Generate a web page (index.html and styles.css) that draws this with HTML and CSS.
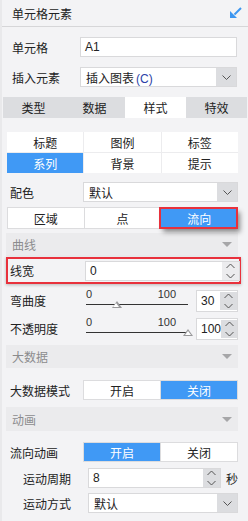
FILE: index.html
```html
<!DOCTYPE html>
<html>
<head>
<meta charset="utf-8">
<link rel="stylesheet" href="styles.css">
</head>
<body>
<div class="panel">
  <div class="header">
    <span>单元格元素</span>
    <svg class="hdr-icon" width="12" height="12" viewBox="0 0 12 12">
      <path d="M11 1 L4.5 7.5" stroke="#3d96f0" stroke-width="2" fill="none"/>
      <path d="M0 4 L0 11 L7 11 Z" fill="#3d96f0"/>
    </svg>
  </div>

  <div class="row r-cell">
    <span class="lbl w68">单元格</span>
    <div class="input w157">A1</div>
  </div>
  <div class="row r-insert">
    <span class="lbl w68">插入元素</span>
    <div class="select w157"><span class="sel-text">插入图表<span class="hot">(C)</span></span><span class="dd"><svg width="9" height="5" viewBox="0 0 9 5"><path d="M0.5 0.5 L4.5 4.5 L8.5 0.5" stroke="#555" fill="none"/></svg></span></div>
  </div>

  <div class="tabs">
    <div class="tab">类型</div>
    <div class="tab">数据</div>
    <div class="tab on">样式</div>
    <div class="tab">特效</div>
  </div>

  <div class="subgrid">
    <div class="sg">标题</div>
    <div class="sg">图例</div>
    <div class="sg">标签</div>
    <div class="sg on">系列</div>
    <div class="sg">背景</div>
    <div class="sg">提示</div>
  </div>

  <div class="row r-color">
    <span class="lbl w73">配色</span>
    <div class="select w155"><span class="sel-text">默认</span><span class="dd"><svg width="9" height="5" viewBox="0 0 9 5"><path d="M0.5 0.5 L4.5 4.5 L8.5 0.5" stroke="#555" fill="none"/></svg></span></div>
  </div>

  <div class="seg seg-main">
    <div class="sc">区域</div>
    <div class="sc">点</div>
    <div class="sc on mark">流向</div>
  </div>

  <div class="sec s-curve"><span>曲线</span><span class="tri"></span></div>

  <div class="mark-row">
    <span class="lbl w73i">线宽</span>
    <div class="spin-input w155">
      <span class="val">0</span>
      <span class="spin light"><svg width="9" height="16" viewBox="0 0 9 16"><path d="M0.5 5 L4.5 1 L8.5 5" stroke="#555" fill="none"/><path d="M0.5 11 L4.5 15 L8.5 11" stroke="#555" fill="none"/></svg></span>
    </div>
  </div>

  <div class="row r-slider1">
    <span class="lbl w76">弯曲度</span>
    <div class="slider">
      <div class="sl-labels"><span>0</span><span>100</span></div>
      <div class="sl-track"><span class="thumb" style="left:30%"></span></div>
    </div>
    <div class="spin-input w42">
      <span class="val">30</span>
      <span class="spin"><svg width="9" height="16" viewBox="0 0 9 16"><path d="M0.5 5 L4.5 1 L8.5 5" stroke="#555" fill="none"/><path d="M0.5 11 L4.5 15 L8.5 11" stroke="#555" fill="none"/></svg></span>
    </div>
  </div>

  <div class="row r-slider2">
    <span class="lbl w76">不透明度</span>
    <div class="slider">
      <div class="sl-labels"><span>0</span><span>100</span></div>
      <div class="sl-track"><span class="thumb" style="left:100%"></span></div>
    </div>
    <div class="spin-input w42">
      <span class="val">100</span>
      <span class="spin"><svg width="9" height="16" viewBox="0 0 9 16"><path d="M0.5 5 L4.5 1 L8.5 5" stroke="#555" fill="none"/><path d="M0.5 11 L4.5 15 L8.5 11" stroke="#555" fill="none"/></svg></span>
    </div>
  </div>

  <div class="sec s-big"><span>大数据</span><span class="tri"></span></div>

  <div class="row r-bigmode">
    <span class="lbl w73">大数据模式</span>
    <div class="seg w155">
      <div class="sc">开启</div>
      <div class="sc on">关闭</div>
    </div>
  </div>

  <div class="sec s-anim"><span>动画</span><span class="tri"></span></div>

  <div class="row r-flow">
    <span class="lbl w73">流向动画</span>
    <div class="seg w155">
      <div class="sc on">开启</div>
      <div class="sc">关闭</div>
    </div>
  </div>

  <div class="row r-period">
    <span class="lbl w65">运动周期</span>
    <div class="spin-input w133">
      <span class="val">8</span>
      <span class="spin"><svg width="9" height="16" viewBox="0 0 9 16"><path d="M0.5 5 L4.5 1 L8.5 5" stroke="#555" fill="none"/><path d="M0.5 11 L4.5 15 L8.5 11" stroke="#555" fill="none"/></svg></span>
    </div>
    <span class="unit">秒</span>
  </div>

  <div class="row r-way">
    <span class="lbl w65">运动方式</span>
    <div class="select w150"><span class="sel-text">默认</span><span class="dd"><svg width="9" height="5" viewBox="0 0 9 5"><path d="M0.5 0.5 L4.5 4.5 L8.5 0.5" stroke="#555" fill="none"/></svg></span></div>
  </div>
</div>
</body>
</html>
```

FILE: styles.css
```css
* { box-sizing: border-box; }
html, body { margin: 0; padding: 0; }
body {
  width: 248px;
  height: 521px;
  overflow: hidden;
  background: #f3f3f5;
  font-family: "Microsoft YaHei", "Noto Sans CJK SC", "Liberation Sans", sans-serif;
  font-size: 12px;
  color: #222;
}
.panel {
  width: 248px;
  height: 521px;
  border-left: 2px solid #e9e9eb;
  display: flex;
  flex-direction: column;
}
.header {
  height: 27px;
  border-bottom: 1px solid #d6d6d8;
  display: flex;
  align-items: center;
  justify-content: space-between;
  padding: 0 6px 0 10px;
  font-size: 12px;
  flex: none;
}
.hdr-icon { margin-top: 0; }

.row {
  display: flex;
  align-items: center;
  height: 20px;
  flex: none;
}
.lbl { flex: none; white-space: nowrap; }
.w68 { width: 68px; }
.w73 { width: 73px; }
.w76 { width: 76px; }
.w65 { width: 65px; }
.r-cell { margin-top: 10px; padding-left: 10px; }
.r-insert { margin-top: 10px; padding-left: 10px; }
.r-color { margin-top: 9px; padding-left: 8px; }

.input, .select, .spin-input {
  height: 20px;
  background: #fff;
  border: 1px solid #d9d9db;
  display: flex;
  align-items: center;
  flex: none;
}
.input { padding-left: 4px; font-family: "Liberation Sans", sans-serif; }
.w157 { width: 157px; }
.w155 { width: 155px; }
.w150 { width: 150px; }
.w133 { width: 133px; }
.w42 { width: 42px; }
.select { justify-content: space-between; }
.sel-text { padding-left: 5px; }
.hot { color: #2b3fa8; font-family: "Liberation Sans", sans-serif; margin-left: 2px; }
.dd {
  width: 20px;
  height: 18px;
  background: #dcdde0;
  display: flex;
  align-items: center;
  justify-content: center;
}

.tabs {
  margin: 10px 0 0 1px;
  width: 244px;
  height: 21px;
  display: flex;
  flex: none;
}
.tab {
  flex: 1;
  background: #dcdde0;
  display: flex;
  align-items: center;
  justify-content: center;
  font-size: 12px;
}
.tab.on { background: #fff; }

.subgrid {
  margin: 14px 0 0 5px;
  width: 231px;
  height: 41px;
  display: grid;
  grid-template-columns: 1fr 1fr 1fr;
  grid-template-rows: 20px 20px;
  gap: 1px;
  background: #ececee;
  flex: none;
}
.sg {
  background: #fff;
  display: flex;
  align-items: center;
  justify-content: center;
}
.sg.on { background: #4099f5; color: #fff; }

.seg {
  display: flex;
  height: 20px;
  background: #fff;
  border: 1px solid #dcdcde;
  flex: none;
}
.sc {
  flex: 1;
  display: flex;
  align-items: center;
  justify-content: center;
}
.sc + .sc { border-left: 1px solid #dcdcde; }
.sc.on { background: #4099f5; color: #fff; }
.seg-main {
  margin: 5px 0 0 5px;
  width: 231px;
  height: 22px;
}
.mark {
  outline: 2px solid #e8313c;
  outline-offset: -1px;
  box-shadow: 3px 4px 5px rgba(0,0,0,0.45);
  position: relative;
  z-index: 1;
}

.sec {
  margin-left: 4px;
  width: 232px;
  height: 23px;
  background: #ebebed;
  color: #8b8b8d;
  display: flex;
  align-items: center;
  justify-content: space-between;
  padding: 0 6px 0 6px;
  flex: none;
}
.tri {
  width: 0; height: 0;
  border-left: 5px solid transparent;
  border-right: 5px solid transparent;
  border-top: 5px solid #a6a6a8;
}
.s-curve { margin-top: 4px; }
.s-big { margin-top: 4px; }
.s-anim { margin-top: 7px; height: 24px; }

.mark-row {
  margin: 1px 0 0 4px;
  width: 235px;
  height: 27px;
  border: 2px solid #e8313c;
  display: flex;
  align-items: center;
  padding-left: 2px;
  box-shadow: 0 1px 3px rgba(0,0,0,0.25);
  flex: none;
}
.w73i { width: 75px; }
.spin-input { justify-content: space-between; }
.val { padding-left: 4px; font-family: "Liberation Sans", sans-serif; font-size: 12px; }
.spin {
  width: 17px;
  height: 18px;
  background: #dcdde0;
  display: flex;
  align-items: center;
  justify-content: center;
}
.spin.light { background: #ececee; }

.r-slider1 { margin-top: 4px; height: 25px; padding-left: 8px; }
.r-slider2 { margin-top: 3px; height: 25px; padding-left: 8px; }
.r-slider1 .spin-input, .r-slider2 .spin-input { height: 22px; }
.slider {
  width: 102px;
  height: 25px;
  margin-right: 8px;
  display: flex;
  flex-direction: column;
  flex: none;
}
.sl-labels {
  display: flex;
  justify-content: space-between;
  font-family: "Liberation Sans", sans-serif;
  font-size: 11px;
  color: #333;
  height: 14px;
  line-height: 12px;
  padding-right: 12px;
}
.sl-track {
  position: relative;
  margin-top: 2px;
  height: 1px;
  background: #333;
}
.thumb {
  position: absolute;
  top: -3px;
  width: 10px;
  height: 7px;
  margin-left: -5px;
}
.thumb::before {
  content: "";
  position: absolute;
  left: 0; top: 0;
  border-left: 5px solid transparent;
  border-right: 5px solid transparent;
  border-bottom: 7px solid #9a9a9c;
}
.thumb::after {
  content: "";
  position: absolute;
  left: 1.5px; top: 2px;
  border-left: 3.5px solid transparent;
  border-right: 3.5px solid transparent;
  border-bottom: 4.5px solid #fff;
}

.r-bigmode { margin-top: 12px; padding-left: 8px; }
.r-flow { margin-top: 11px; padding-left: 8px; }
.r-period { margin-top: 6px; padding-left: 21px; }
.r-period .spin-input { width: 133px; }
.unit { margin-left: 5px; }
.r-way { margin-top: 5px; padding-left: 21px; }
```
